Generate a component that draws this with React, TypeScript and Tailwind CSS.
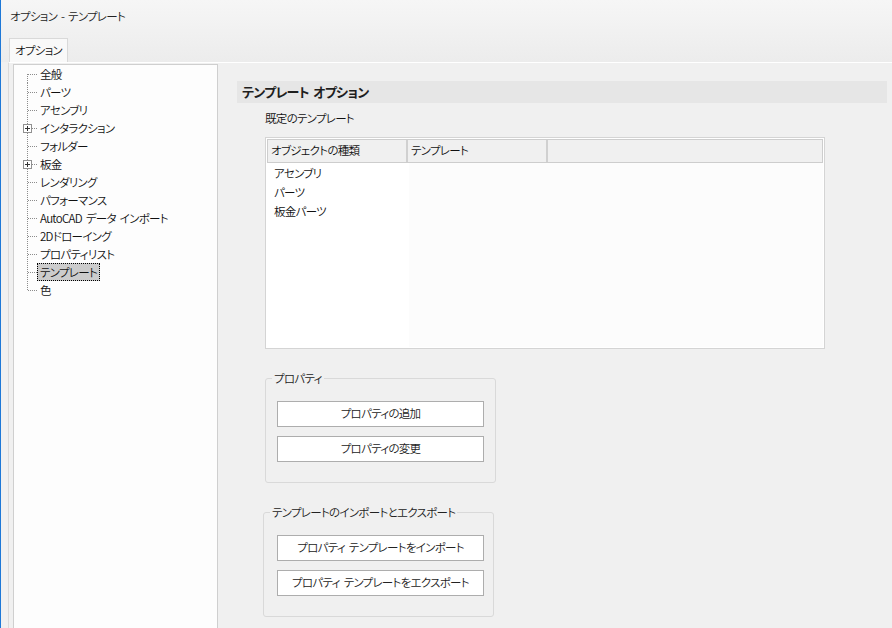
const treeItems = [
  { label: "全般" },
  { label: "パーツ" },
  { label: "アセンブリ" },
  { label: "インタラクション", plus: true },
  { label: "フォルダー" },
  { label: "板金", plus: true },
  { label: "レンダリング" },
  { label: "パフォーマンス" },
  { label: "AutoCAD データ インポート" },
  { label: "2Dドローイング" },
  { label: "プロパティリスト" },
  { label: "テンプレート", selected: true },
  { label: "色" },
];

function Connector({ first, last, plus }: { first: boolean; last: boolean; plus?: boolean }) {
  return (
    <svg width="23" height="18" className="shrink-0" shapeRendering="crispEdges">
      <line
        x1="13.5"
        y1={first ? 9 : 0}
        x2="13.5"
        y2={last ? 10 : 18}
        stroke="#8c8c8c"
        strokeDasharray="1 1"
      />
      <line x1="14" y1="9.5" x2="23" y2="9.5" stroke="#8c8c8c" strokeDasharray="1 1" />
      {plus && (
        <g>
          <rect x="9.5" y="5.5" width="8" height="8" fill="#fff" stroke="#919191" />
          <line x1="11" y1="9.5" x2="16" y2="9.5" stroke="#333" />
          <line x1="13.5" y1="7" x2="13.5" y2="12" stroke="#333" />
        </g>
      )}
    </svg>
  );
}

function Tree() {
  return (
    <div className="mt-px ml-[4px] h-[600px] w-[205px] shrink-0 border border-[#cfcfcf] bg-[#fdfdfd]">
      {treeItems.map((it, i) => (
        <div key={it.label} className="flex h-[18px] items-center">
          <Connector first={i === 0} last={i === treeItems.length - 1} plus={it.plus} />
          <span
            className={
              it.selected
                ? "border border-dotted border-black bg-[#cccccc] px-[2px] leading-[16px]"
                : "border border-transparent px-[2px] leading-[16px]"
            }
          >
            {it.label}
          </span>
        </div>
      ))}
    </div>
  );
}

function GroupBox({
  title,
  buttons,
  className,
  pad,
}: {
  title: string;
  buttons: string[];
  className: string;
  pad: string;
}) {
  return (
    <div className={"relative h-[105px] w-[231px] rounded-[3px] border border-[#d9d9d9] " + className}>
      <span className="absolute -top-[9px] left-[6px] bg-[#f0f0f0] px-[2px] leading-[16px] text-[#222]">
        {title}
      </span>
      <div className={"flex flex-col gap-[9px] pt-[22px] " + pad}>
        {buttons.map((b) => (
          <div
            key={b}
            className="flex h-[26px] w-[207px] items-center justify-center border border-[#adadad] bg-white text-[#222]"
          >
            {b}
          </div>
        ))}
      </div>
    </div>
  );
}

export default function App() {
  return (
    <div className="h-[628px] w-[892px] overflow-hidden whitespace-nowrap border-l border-[#1e78d7] bg-[#f0f0f0] font-['Noto_Sans_CJK_JP','Noto_Sans',sans-serif] text-[11.5px] font-[350] tracking-[-0.7px] text-[#111] [font-feature-settings:'palt'] [word-spacing:2px]">
      <div className="bg-gradient-to-b from-[#f6f6f6] to-[#ececec]">
        <div className="flex h-[33px] items-center pl-[9px] text-[#222]">オプション - テンプレート</div>
        <div className="flex h-[29px] items-end pl-[8px]">
          <div className="flex h-[24px] w-[59px] items-center justify-center border border-b-0 border-[#d9d9d9] bg-[#f9f9f9] text-[#111]">
            オプション
          </div>
        </div>
      </div>
      <div className="ml-[7px] flex border-t border-l border-white border-l-[#dadada]">
        <Tree />
        <div className="flex-1 pt-[18px] pl-[19px]">
          <div className="flex h-[22px] w-[650px] items-center bg-[#e6e6e6] pl-[5px] text-[13px] font-bold text-[#1e1e1e]">
            テンプレート オプション
          </div>
          <div className="mt-[7px] pl-[28px] leading-[16px]">既定のテンプレート</div>
          <div className="mt-[11px] ml-[28px] h-[212px] w-[560px] border border-[#d4d4d4] bg-white p-px">
            <div className="flex h-[24px] border border-[#cdcdcd] bg-[#f0f0f0]">
              <div className="flex w-[140px] items-center border-r-2 border-[#d0d0d0] pl-[3px]">オブジェクトの種類</div>
              <div className="flex w-[140px] items-center border-r-2 border-[#d0d0d0] pl-[3px]">テンプレート</div>
              <div className="flex-1" />
            </div>
            <div className="flex h-[184px]">
              <div className="w-[142px] pt-px">
                {["アセンブリ", "パーツ", "板金パーツ"].map((r) => (
                  <div key={r} className="flex h-[19px] items-center pl-[7px]">
                    {r}
                  </div>
                ))}
              </div>
              <div className="flex-1 bg-[#fcfcfc]" />
            </div>
          </div>
          <GroupBox
            title="プロパティ"
            buttons={["プロパティの追加", "プロパティの変更"]}
            className="mt-[29px] ml-[28px]"
            pad="pl-[11px]"
          />
          <GroupBox
            title="テンプレートのインポートとエクスポート"
            buttons={["プロパティ テンプレートをインポート", "プロパティ テンプレートをエクスポート"]}
            className="mt-[29px] ml-[26px]"
            pad="pl-[13px]"
          />
        </div>
      </div>
    </div>
  );
}
